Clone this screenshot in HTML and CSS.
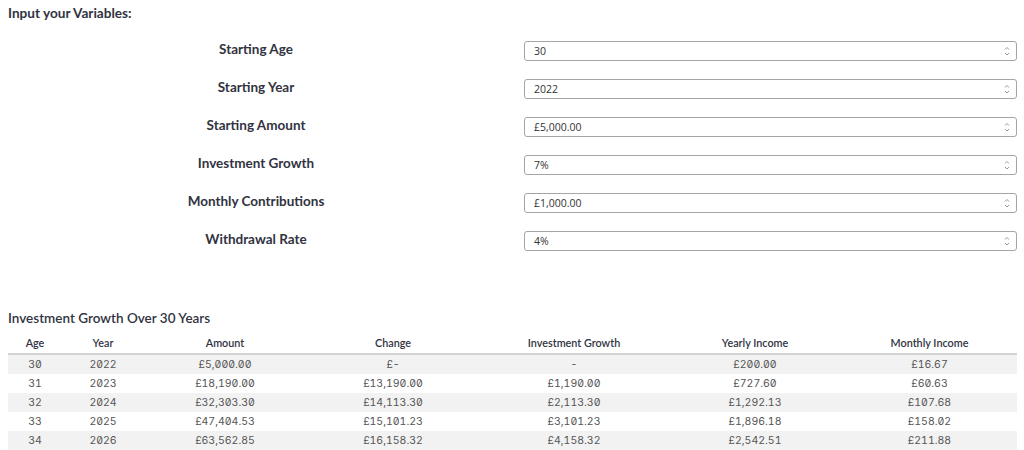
FILE: index.html
```html
<!DOCTYPE html>
<html lang="en">
<head>
    <meta charset="UTF-8">
    <meta name="viewport" content="width=device-width, initial-scale=1.0">
    <title>Investment Calculator</title>
    <link rel="stylesheet" href="styles.css">
</head>
<body>

<h3 class="section-title">Input your Variables:</h3>

<div class="inputs">
    <div class="input-row">
        <label>Starting Age</label>
        <div class="num-box"><span>30</span><span class="spin"><svg width="6" height="12" viewBox="0 0 6 12"><path d="M1 4.5 L3 2.5 L5 4.5 M1 8 L3 10 L5 8" fill="none" stroke="#999" stroke-width="1"/></svg></span></div>
    </div>
    <div class="input-row">
        <label>Starting Year</label>
        <div class="num-box"><span>2022</span><span class="spin"><svg width="6" height="12" viewBox="0 0 6 12"><path d="M1 4.5 L3 2.5 L5 4.5 M1 8 L3 10 L5 8" fill="none" stroke="#999" stroke-width="1"/></svg></span></div>
    </div>
    <div class="input-row">
        <label>Starting Amount</label>
        <div class="num-box"><span>£5,000.00</span><span class="spin"><svg width="6" height="12" viewBox="0 0 6 12"><path d="M1 4.5 L3 2.5 L5 4.5 M1 8 L3 10 L5 8" fill="none" stroke="#999" stroke-width="1"/></svg></span></div>
    </div>
    <div class="input-row">
        <label>Investment Growth</label>
        <div class="num-box"><span>7%</span><span class="spin"><svg width="6" height="12" viewBox="0 0 6 12"><path d="M1 4.5 L3 2.5 L5 4.5 M1 8 L3 10 L5 8" fill="none" stroke="#999" stroke-width="1"/></svg></span></div>
    </div>
    <div class="input-row">
        <label>Monthly Contributions</label>
        <div class="num-box"><span>£1,000.00</span><span class="spin"><svg width="6" height="12" viewBox="0 0 6 12"><path d="M1 4.5 L3 2.5 L5 4.5 M1 8 L3 10 L5 8" fill="none" stroke="#999" stroke-width="1"/></svg></span></div>
    </div>
    <div class="input-row">
        <label>Withdrawal Rate</label>
        <div class="num-box"><span>4%</span><span class="spin"><svg width="6" height="12" viewBox="0 0 6 12"><path d="M1 4.5 L3 2.5 L5 4.5 M1 8 L3 10 L5 8" fill="none" stroke="#999" stroke-width="1"/></svg></span></div>
    </div>
</div>

<h4 class="table-title">Investment Growth Over 30 Years</h4>

<table class="growth">
    <colgroup>
        <col style="width: 54px">
        <col style="width: 82px">
        <col style="width: 162px">
        <col style="width: 174px">
        <col style="width: 188px">
        <col style="width: 174px">
        <col style="width: 175px">
    </colgroup>
    <thead>
        <tr>
            <th>Age</th>
            <th>Year</th>
            <th>Amount</th>
            <th>Change</th>
            <th>Investment Growth</th>
            <th>Yearly Income</th>
            <th>Monthly Income</th>
        </tr>
    </thead>
    <tbody>
        <tr><td>30</td><td>2022</td><td>£5,000.00</td><td>£-</td><td>-</td><td>£200.00</td><td>£16.67</td></tr>
        <tr><td>31</td><td>2023</td><td>£18,190.00</td><td>£13,190.00</td><td>£1,190.00</td><td>£727.60</td><td>£60.63</td></tr>
        <tr><td>32</td><td>2024</td><td>£32,303.30</td><td>£14,113.30</td><td>£2,113.30</td><td>£1,292.13</td><td>£107.68</td></tr>
        <tr><td>33</td><td>2025</td><td>£47,404.53</td><td>£15,101.23</td><td>£3,101.23</td><td>£1,896.18</td><td>£158.02</td></tr>
        <tr><td>34</td><td>2026</td><td>£63,562.85</td><td>£16,158.32</td><td>£4,158.32</td><td>£2,542.51</td><td>£211.88</td></tr>
    </tbody>
</table>

</body>
</html>
```

FILE: styles.css
```css
body {
    font-family: Lato, "Open Sans", sans-serif;
    color: #31333f;
    background-color: #fff;
    margin: 0;
    padding: 0 7px 0 8px;
}
.section-title {
    font-size: 13.6px;
    font-weight: bold;
    margin: 0;
    padding-top: 5px;
    height: 22px;
}
.inputs {
    display: flex;
    flex-direction: column;
    gap: 18px;
    padding-top: 14px;
}
.input-row {
    display: grid;
    grid-template-columns: 496px 1fr;
    column-gap: 20px;
    align-items: center;
    height: 20px;
}
.input-row label {
    text-align: center;
    font-size: 13.5px;
    font-weight: bold;
    margin-bottom: 4px;
}
.num-box {
    display: flex;
    align-items: center;
    justify-content: space-between;
    height: 20px;
    box-sizing: border-box;
    border: 1px solid #a5a5a5;
    border-radius: 3px;
    padding: 0 6px 0 9px;
    font-size: 10.5px;
    font-family: "Open Sans", sans-serif;
    color: #333;
}
.spin {
    display: flex;
}
.table-title {
    font-size: 13.5px;
    font-weight: 600;
    margin: 0;
    padding-top: 59px;
    height: 22px;
}
.growth {
    width: 1009px;
    border-collapse: collapse;
    table-layout: fixed;
}
.growth th {
    font-size: 10.8px;
    font-weight: 600;
    height: 21px;
    padding: 0;
    text-align: center;
    border-bottom: 2px solid #d3d3d6;
}
.growth td {
    font-family: Inter, Lato, sans-serif;
    font-variant-numeric: slashed-zero tabular-nums;
    font-size: 10.5px;
    color: #555;
    height: 19px;
    padding: 0;
    text-align: center;
}
.growth tbody tr:nth-child(odd) {
    background-color: #f2f2f2;
}
```
